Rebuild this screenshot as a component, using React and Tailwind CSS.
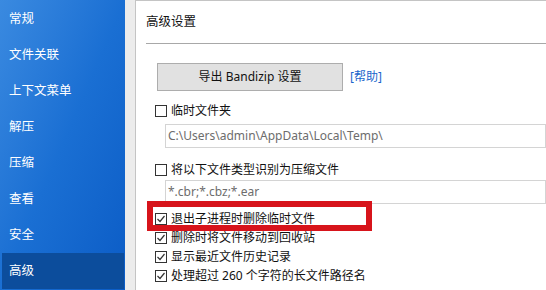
import React from "react";

const font = { fontFamily: '"Noto Sans", "Noto Sans CJK SC", sans-serif' };

function Box({ checked }) {
  return (
    <span className="w-[12px] h-[12px] border border-[#333333] bg-white flex items-center justify-center shrink-0">
      {checked && (
        <svg width="10" height="10" viewBox="0 0 10 10">
          <polyline points="1.5,5 4,7.5 8.5,2" fill="none" stroke="#333333" strokeWidth="1.2" />
        </svg>
      )}
    </span>
  );
}

function Check({ checked, label, className = "" }) {
  return (
    <div className={"flex items-center gap-[4px] pl-[9px] h-[19px] text-[12px] text-[#111]" + " " + className}>
      <Box checked={checked} />
      <span className="leading-none">{label}</span>
    </div>
  );
}

export default function App() {
  const items = ["常规", "文件关联", "上下文菜单", "解压", "压缩", "查看", "安全", "高级"];
  return (
    <div className="w-[546px] h-[290px] flex overflow-hidden bg-white" style={font}>
      <div className="w-[125px] h-full flex flex-col pt-[1px] bg-gradient-to-br from-[#3a8ae0] via-[#1a6fd3] to-[#0b5cc6]">
        {items.map((t) => (
          <div
            key={t}
            className={
              "h-[36px] flex items-center pl-[7px] ml-[2px] mr-[1px] text-white text-[12.5px] " +
              (t === "高级" ? "bg-[#0c4d9c]" : "")
            }
          >
            {t}
          </div>
        ))}
      </div>
      <div className="w-[10px] h-full bg-[#ececec]" />
      <div className="relative flex-1 h-full border-l border-t border-[#c4c4c4] bg-white pl-[10px] flex flex-col">
        <div className="h-[42px] flex items-center text-[12.5px] text-[#111]">高级设置</div>
        <div className="h-px bg-[#a8a8a8]" />
        <div className="mt-[19px] flex items-center">
          <div className="ml-[11px] w-[186px] h-[28px] bg-[#e1e1e1] border border-[#adadad] flex items-center justify-center text-[12px] text-[#111]">
            导出 Bandizip 设置
          </div>
          <span className="ml-[7px] text-[12px] text-[#1a66cc]">[帮助]</span>
        </div>
        <Check label="临时文件夹" className="mt-[10px]" />
        <div className="mt-[4px] ml-[19px] h-[24px] border border-[#d4d4d4] flex items-center pl-[2px] text-[12px] text-[#6d6d6d] whitespace-nowrap">
          C:\Users\admin\AppData\Local\Temp\
        </div>
        <Check label="将以下文件类型识别为压缩文件" className="mt-[12px]" />
        <div className="mt-[1px] ml-[19px] h-[24px] border border-[#d4d4d4] flex items-center pl-[2px] text-[12px] text-[#6d6d6d] whitespace-nowrap">
          *.cbr;*.cbz;*.ear
        </div>
        <Check checked label="退出子进程时删除临时文件" className="mt-[5px]" />
        <Check checked label="删除时将文件移动到回收站" />
        <Check checked label="显示最近文件历史记录" />
        <Check checked label="处理超过 260 个字符的长文件路径名" />
        <div className="absolute left-[11px] top-[200px] w-[225px] h-[30px] border-[6px] border-[#d7141b]" />
      </div>
    </div>
  );
}
